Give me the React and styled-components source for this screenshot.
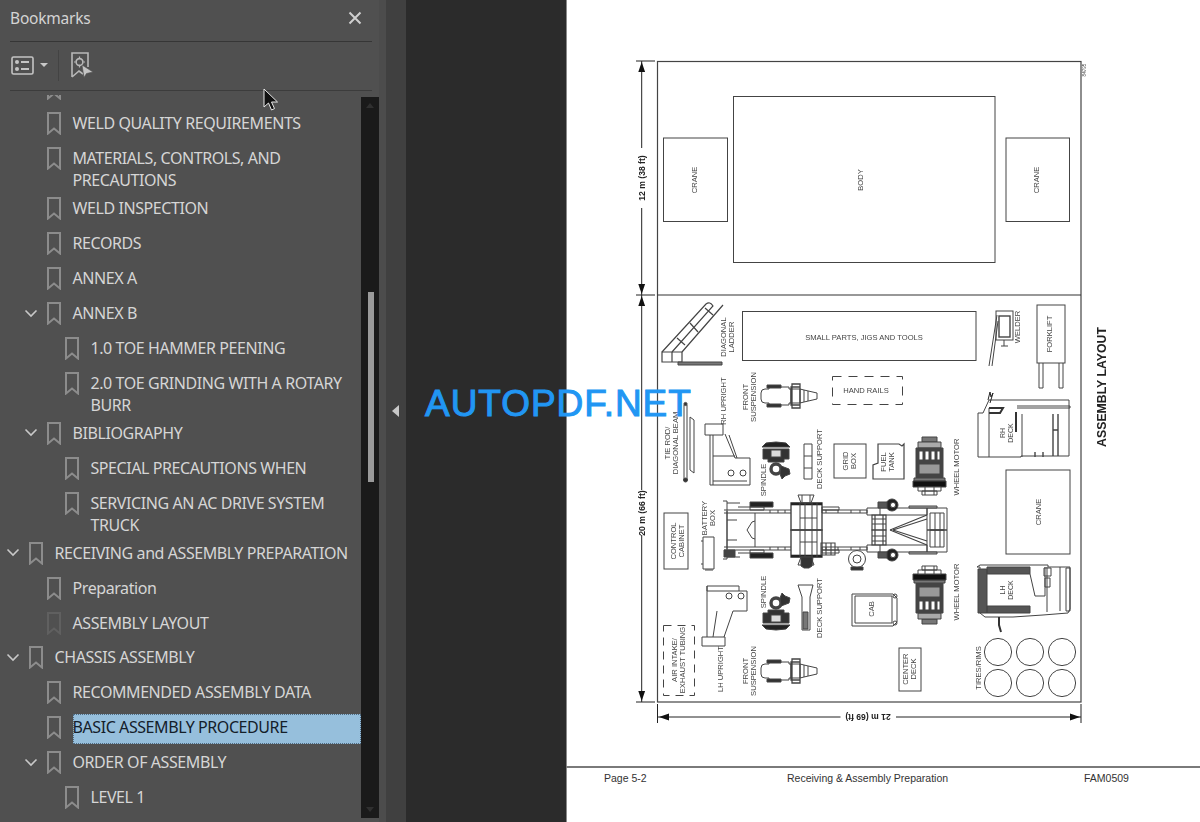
import React from 'react'
import styled, { createGlobalStyle } from 'styled-components'

const Global = createGlobalStyle`
  html, body {
    margin: 0;
    padding: 0;
    height: 100%;
    overflow: hidden;
    background: #2b2b2b;
  }
  #root {
    height: 100%;
  }
`

const Shell = styled.div`
  position: relative;
  display: flex;
  width: 1200px;
  height: 822px;
  overflow: hidden;
  font-family: 'Noto Sans', 'Open Sans', sans-serif;
`

const Sidebar = styled.aside`
  width: 386px;
  flex: none;
  display: flex;
  flex-direction: column;
  background: #505050;
  box-shadow: inset -7px 0 0 #4c4c4c;
`

const Header = styled.div`
  height: 42px;
  margin: 0 14px 0 10px;
  box-sizing: border-box;
  border-bottom: 1px solid #363636;
  display: flex;
  align-items: flex-start;
  justify-content: space-between;
  padding: 7px 10px 0 0;
  flex: none;
`

const Title = styled.div`
  font-size: 15.5px;
  line-height: 22px;
  letter-spacing: -0.2px;
  color: #d4d4d4;
`

const CloseBtn = styled.svg`
  width: 14px;
  height: 14px;
  margin-top: 4px;
`

const Toolbar = styled.div`
  height: 49px;
  margin: 0 14px 0 10px;
  padding-bottom: 2px;
  box-sizing: border-box;
  border-bottom: 1px solid #3c3c3c;
  display: flex;
  align-items: center;
  flex: none;
`

const CaretDown = styled.span`
  width: 0;
  height: 0;
  margin: 0 10px 0 6px;
  border-left: 4px solid transparent;
  border-right: 4px solid transparent;
  border-top: 4px solid #c8c8c8;
`

const ToolSep = styled.span`
  width: 1px;
  height: 31px;
  background: #434343;
  margin-right: 12px;
`

const Body = styled.div`
  flex: 1;
  min-height: 0;
  display: flex;
  padding-right: 7px;
`

const Tree = styled.div`
  flex: 1;
  min-width: 0;
  margin-top: 4px;
  overflow: hidden;
`

const TreeInner = styled.div`
  margin-top: -23.6px;
`

const Row = styled.div`
  display: flex;
  align-items: flex-start;
  min-height: 34.93px;
  box-sizing: border-box;
  padding-top: 6px;
  margin-left: ${({ $level }) => $level * 18}px;
`

const ChevronSlot = styled.span`
  flex: none;
  width: 29px;
  height: 22px;
  display: flex;
  align-items: center;
  padding-left: 6px;
  box-sizing: border-box;
`

const Mark = styled.svg`
  flex: none;
  width: 14px;
  height: 23px;
  margin-right: 11.5px;
  color: ${({ $dim }) => ($dim ? '#606060' : '#8c8c8c')};
`

const Label = styled.div`
  flex: 1;
  min-width: 0;
  font-size: 16px;
  line-height: 22px;
  letter-spacing: -0.42px;
  padding-right: 10px;
  color: #d6d6d6;
  ${({ $selected }) =>
    $selected &&
    `
    background: #96bfdc;
    color: #14202a;
    outline: 1px dotted #506a80;
    outline-offset: -1px;
    padding-top: 2px;
    padding-bottom: 6px;
    margin-top: -2px;
    margin-bottom: -6px;
  `}
`

const ScrollTrack = styled.div`
  flex: none;
  width: 18px;
  margin: 6px 0 4px;
  background: #1a1a1a;
  position: relative;
  display: flex;
  flex-direction: column;
  align-items: center;
  justify-content: space-between;
  padding: 6px 0;
  box-sizing: border-box;
`

const ScrollArrow = styled.span`
  width: 0;
  height: 0;
  border-left: 4px solid transparent;
  border-right: 4px solid transparent;
  ${({ $up }) =>
    $up ? 'border-bottom: 5px solid #303030;' : 'border-top: 5px solid #303030;'}
`

const ScrollThumb = styled.span`
  position: absolute;
  left: 7px;
  top: 195px;
  width: 6px;
  height: 190px;
  background: #9a9a9a;
`

const Splitter = styled.div`
  width: 20px;
  flex: none;
  background: #404040;
  display: flex;
  align-items: center;
  justify-content: center;
`

const SplitArrow = styled.span`
  width: 0;
  height: 0;
  margin-left: -2px;
  margin-top: -1px;
  border-top: 6px solid transparent;
  border-bottom: 6px solid transparent;
  border-right: 7px solid #c8c8c8;
`

const Gutter = styled.div`
  width: 160px;
  flex: none;
  background: #2b2b2b;
`

const Page = styled.main`
  flex: 1;
  min-width: 0;
  background: #fff;
  display: flex;
  flex-direction: column;
  box-shadow: inset 1px 0 0 #8a8a8a;
`

const Sheet = styled.svg`
  display: block;
  width: 634px;
  height: 766px;
  flex: none;
  filter: blur(0.3px);
`

const Footer = styled.div`
  border-top: 2px solid #7a7a7a;
  display: grid;
  grid-template-columns: 183px 297px auto;
  padding: 4px 0 0 38px;
  font-family: 'Liberation Sans', Arial, sans-serif;
  font-size: 10.5px;
  line-height: 13px;
  color: #333;
`

const Caption = styled.text`
  font-family: 'Liberation Sans', Arial, sans-serif;
  font-size: ${({ $size }) => $size || 7.6}px;
  font-weight: ${({ $bold }) => ($bold ? 700 : 400)};
  fill: ${({ $bold }) => ($bold ? '#222' : '#444')};
  text-anchor: middle;
`

const Watermark = styled.div`
  position: absolute;
  left: 425px;
  top: 383px;
  font-family: 'Liberation Sans', Arial, sans-serif;
  font-size: 37px;
  line-height: 42px;
  letter-spacing: 0.95px;
  color: #2196f3;
  -webkit-text-stroke: 1px #2196f3;
  white-space: nowrap;
`

const Pointer = styled.svg`
  position: absolute;
  left: 262px;
  top: 88px;
  width: 17px;
  height: 24px;
`

const BookmarkIcon = ({ dim }) => (
  <Mark viewBox="0 0 14 23" $dim={dim}>
    <path d="M1 1h12v20.5l-6-5-6 5z" fill="none" stroke="currentColor" strokeWidth="2" />
  </Mark>
)

const rows = [
  { level: 1, text: '' },
  { level: 1, text: 'WELD QUALITY REQUIREMENTS' },
  { level: 1, text: 'MATERIALS, CONTROLS, AND PRECAUTIONS' },
  { level: 1, text: 'WELD INSPECTION' },
  { level: 1, text: 'RECORDS' },
  { level: 1, text: 'ANNEX A' },
  { level: 1, text: 'ANNEX B', open: true },
  { level: 2, text: '1.0 TOE HAMMER PEENING' },
  { level: 2, text: '2.0 TOE GRINDING WITH A ROTARY BURR' },
  { level: 1, text: 'BIBLIOGRAPHY', open: true },
  { level: 2, text: 'SPECIAL PRECAUTIONS WHEN' },
  { level: 2, text: 'SERVICING AN AC DRIVE SYSTEM TRUCK' },
  { level: 0, text: 'RECEIVING and ASSEMBLY PREPARATION', open: true },
  { level: 1, text: 'Preparation' },
  { level: 1, text: 'ASSEMBLY LAYOUT', dim: true },
  { level: 0, text: 'CHASSIS ASSEMBLY', open: true },
  { level: 1, text: 'RECOMMENDED ASSEMBLY DATA' },
  { level: 1, text: 'BASIC ASSEMBLY PROCEDURE', selected: true },
  { level: 1, text: 'ORDER OF ASSEMBLY', open: true },
  { level: 2, text: 'LEVEL 1' },
]

// rotated caption, lines stacked left to right
const Rot = ({ x, y, lines, size, bold }) => (
  <g>
    {lines.map((line, i) => {
      const lx = x + i * 8.4
      return (
        <Caption key={line} x={lx} y={y} $size={size} $bold={bold} transform={`rotate(-90 ${lx} ${y})`}>
          {line}
        </Caption>
      )
    })}
  </g>
)

const Suspension = ({ x, y }) => (
  <g transform={`translate(${x} ${y})`}>
    <path d="M0 9q0-4 4-4h4v-2h20v2h2v14h-2v2h-20v-2h-4q-4 0-4-4z" />
    <path d="M6 1h14v3h-14zM6 20h14v3h-14z" fill="#333" />
    <path d="M30 3h9v18h-9zM31 0h8v24h-8z" fill="#fff" strokeWidth="1.3" />
    <path d="M31 5h8M31 19h8" />
    <path d="M39 5l4 1 13 3v6l-13 3-4 1z" />
    <path d="M43 6v12M47 7v10" />
  </g>
)

const Spindle = ({ x, y, flip }) => (
  <g transform={flip ? `translate(${x} ${y + 37}) scale(1 -1)` : `translate(${x} ${y})`}>
    <path d="M4 0q10-2 20 0l4 4h-28z" fill="#222" />
    <path d="M1 6h26v10h-5v3h-16v-3h-5z" fill="#333" />
    <rect x="9" y="7" width="10" height="7" fill="#ddd" />
    <circle cx="14" cy="26" r="5" fill="#fff" strokeWidth="3.4" />
    <path d="M19 23l8 3 1 5-5 2-3 3-2-5z" fill="#333" />
  </g>
)

const WheelMotor = ({ x, y, flip }) => (
  <g transform={flip ? `translate(${x} ${y + 58}) scale(1 -1)` : `translate(${x} ${y})`}>
    <path d="M9 0h15v5h-15z" fill="#777" />
    <path d="M5 5h23v6h-23z" fill="#aaa" />
    <path d="M3 11h27v30h-27z" fill="#444" />
    <path d="M6 14h4v9h-4zM12 14h4v9h-4zM18 14h4v9h-4zM24 14h3v9h-3z" fill="#fff" />
    <path d="M6 27h21v10h-21z" fill="#999" />
    <path d="M1 41h31v3h-31z" fill="#777" />
    <path d="M0 44h33v6h-33z" fill="#111" />
    <path d="M5 50h23v4h-23zM9 54h15v4h-15z" fill="#fff" />
    <path d="M12 50v8M21 50v8" />
  </g>
)

// upper half of the frame, mirrored about y=530
const ChassisHalf = () => (
  <g>
    <path d="M723 501h4v29M727 503h13M724 510h67M724 513h67" />
    <path d="M727 520h10M727 511v19" />
    <path d="M750 502h23v5h-23z" fill="#222" />
    <path d="M750 507h14v3h-14z" />
    <path d="M755 513v17M747 530l5-8 3-1M738 507h12M770 510v3M778 510v3M785 510v3" />
    <path d="M791 503h31v27h-31z" strokeWidth="1.4" />
    <path d="M791 504h31" strokeWidth="2.6" stroke="#222" />
    <path d="M798 495h16l-3 8h-10z" />
    <path d="M802 495v8M810 495v8" />
    <path d="M800 503v27M805 503v27M812 503v27M817 503v27M800 518h17" />
    <path d="M822 507h17v3h-17zM822 510h45v3h-45z" />
    <path d="M826 510v3M838 510v3M851 510v3M860 510v3" />
    <path d="M867 508h60v7h-60zM880 508v7" />
    <path d="M872 515h14v15h-14zM872 519h14M872 524h14M875 515v15M883 515v15" strokeWidth="1.2" />
    <path d="M890 530l37-15M893 530l34-11" strokeWidth="1.2" />
    <path d="M927 508h20v22h-20zM930 513h14v17h-14zM935 513v17M940 513v17" />
    <circle cx="892" cy="505" r="6" fill="#222" />
    <circle cx="893" cy="505" r="2.6" fill="#fff" />
    <path d="M878 502h9v6h-9z" fill="#555" />
    <path d="M909 506h28v2h-28z" fill="#aaa" />
  </g>
)

const Chassis = () => (
  <g>
    <ChassisHalf />
    <g transform="matrix(1 0 0 -1 0 1060)">
      <ChassisHalf />
    </g>
    <path d="M724 550h11v7h-11z" fill="#444" />
    <path d="M821 543h14v12h-14zM826 543v12M831 543v12" strokeWidth="1.1" />
    <path d="M801 557h12l-1 9-3 2h-5l-3-2z" fill="#333" />
    <circle cx="857" cy="559" r="8.5" fill="#fff" />
    <circle cx="857" cy="559" r="4" />
    <path d="M851 567h12v3h-12z" fill="#333" />
  </g>
)

const Drawing = () => (
  <Sheet viewBox="566 0 634 766">
    <g fill="none" stroke="#444" strokeWidth="1">
      {/* bays */}
      <rect x="657.5" y="61.5" width="423.5" height="640.5" strokeWidth="1.2" />
      <path d="M657.5 295h423.5" strokeWidth="1.2" stroke="#333" />
      <rect x="733.5" y="96.5" width="261.5" height="166" />
      <rect x="663.5" y="138" width="64" height="83.5" />
      <rect x="1006" y="138" width="63.5" height="83.5" />
      <rect x="742.5" y="311.5" width="233.5" height="49" />
      <rect x="1006" y="470" width="64" height="84" />
      <rect x="664" y="513" width="24" height="56" />
      <rect x="834" y="444" width="32" height="34" />
      <rect x="899" y="648" width="22" height="43" />
      <rect x="1037" y="305" width="28" height="58" />
      <path d="M1039 363v25h4v-25M1059 363v25h4v-25" />
      <rect x="832.5" y="376.5" width="70" height="28" strokeDasharray="9 7" />
      <rect x="663.5" y="625.5" width="31" height="70" strokeDasharray="8 6" />
      {[998, 1030, 1062].flatMap(cx =>
        [652, 683].map(cy => <circle key={`${cx}-${cy}`} cx={cx} cy={cy} r="13.6" />)
      )}

      {/* dimensions */}
      <g stroke="#222">
        <path d="M636 61h19M636 295h19M636 702h19" />
        <path d="M641.7 61v87M641.7 208v87M641.7 295v195M641.7 535v167" />
        <path d="M657.5 704v19M1081 704v19" />
        <path d="M657.5 717h183M896 717h185" />
      </g>
      <g fill="#111" stroke="none">
        <path d="M641.7 62l-3.4 10h6.8zM641.7 294l-3.4-10h6.8zM641.7 296l-3.4 10h6.8zM641.7 701l-3.4-10h6.8z" />
        <path d="M659 717l10-3.4v6.8zM1080 717l-10-3.4v6.8z" />
      </g>

      {/* ladder */}
      <path d="M662 352l44-48q4-3 7 2l-41 46M682 352l41-47M677 338l8 7M690 323l8 9M705 308l8 7" strokeWidth="1.2" />
      <path d="M662 352h20v10h-20zM672 352v10" strokeWidth="1.2" />
      <path d="M678 362h44v3h-44z" fill="#777" />

      {/* welder */}
      <rect x="996" y="311" width="17" height="29" />
      <rect x="999" y="316" width="11" height="21" strokeWidth="1.4" />
      <path d="M997 315l-8 51M992 366l6-45M1004 340v6M1001 346h7" />

      {/* RH deck */}
      <path d="M978 413h5l6-13h80v56h-48v1h-43z" />
      <path d="M989 408v49M1017 408h53v-2h-53M1022 414v43" />
      <path d="M989 408h14l-3 5h-11M1016 412v20" strokeWidth="2" stroke="#333" />
      <path d="M988 400l2-8 1 5 2-4-3 10" stroke="#222" />
      <path d="M1053 414v42M1058 414v42M1053 430h5M1035 452v5M1043 452v5" strokeWidth="1.4" />

      {/* LH deck */}
      <path d="M977 567h3v46l5 4h28l30-2 25-2 2-4v-42h-22v-2h-68z" fill="#fff" />
      <path d="M978 569h9v44h-9zM987 567h43v7h-43zM987 606h43v7h-43z" fill="#555" />
      <path d="M1047 567v45M1060 567v44M1066 568h4v43h-4z" />
      <path d="M1030 574l5 22h10v-29" />
      <path d="M1044 568h7v8h-7zM1045 578h5v9h-5z" />
      <path d="M999 617v8l2 7" strokeWidth="2" stroke="#333" />

      {/* parts */}
      <Suspension x={761} y={384} />
      <Suspension x={761} y={659} />
      <Spindle x={762} y={443} />
      <Spindle x={762} y={592} flip />
      <WheelMotor x={913} y={437} />
      <WheelMotor x={913} y={566} flip />
      <Chassis />

      {/* tie rod */}
      <path d="M684 405v75M687 405v75" />
      <path d="M690 417l4 3v53l-4-3z" />
      <circle cx="685.5" cy="404" r="1.6" fill="#333" />
      <circle cx="685.5" cy="480" r="2" fill="#333" />

      {/* RH upright */}
      <path d="M705 424h18v11h-18zM710 435v50h40v-27h-15l-10-24" />
      <path d="M713 435v50M713 456h22M729 435l8 23M713 481h34" />
      <circle cx="731" cy="473" r="3" />
      <circle cx="743" cy="473" r="3" />

      {/* LH upright */}
      <path d="M707 586h32v5h-32zM707 586v51M739 591h8v20h-14l-9 26" />
      <path d="M702 637h23v9h-23zM717 611l-4 26" />
      <circle cx="729" cy="596" r="3" />
      <circle cx="741" cy="596" r="3" />

      {/* deck supports */}
      <path d="M804 444h8v35h-8zM804 456h8M804 468h8" />
      <path d="M798 585h15l-3 12v33h-8v-33z" />
      <path d="M803 612h5v17h-5z" fill="#777" />

      {/* fuel tank */}
      <path d="M878 444h21l3 2 2-2v35h-31v-14l5-2z" strokeWidth="1.2" />

      {/* cab */}
      <path d="M852 594h41l4 4v24l-4 4h-41z" />
      <path d="M855 596h37v27h-37z" />
      <circle cx="895" cy="596" r="2" />
      <circle cx="895" cy="623" r="2" />

      {/* battery box */}
      <path d="M703 537h11v32h-11zM701 541h2M701 564h2M705 570h8" />
    </g>

    <Caption x="864" y="340" $size={7.6}>SMALL PARTS, JIGS AND TOOLS</Caption>
    <Caption x="866" y="393" $size={7.6}>HAND RAILS</Caption>
    <Rot x={697} y={180} lines={['CRANE']} />
    <Rot x={863} y={180} lines={['BODY']} />
    <Rot x={1039} y={180} lines={['CRANE']} />
    <Rot x={645} y={178} lines={['12 m (38 ft)']} size={8.6} bold />
    <Rot x={645} y={513} lines={['20 m (66 ft)']} size={8.6} bold />
    <Caption x="868" y="720" $size={8.6} $bold transform="rotate(180 868 717)">21 m (69 ft)</Caption>
    <Rot x={1086} y={70} lines={['84795']} size={4.6} />
    <Rot x={726} y={337} lines={['DIAGONAL', 'LADDER']} />
    <Rot x={748} y={397} lines={['FRONT', 'SUSPENSION']} />
    <Rot x={726} y={401} lines={['RH UPRIGHT']} />
    <Rot x={670} y={443} lines={['TIE ROD/', 'DIAGONAL BEAM']} />
    <Rot x={766} y={480} lines={['SPINDLE']} />
    <Rot x={822} y={459} lines={['DECK SUPPORT']} />
    <Rot x={848} y={461} lines={['GRID', 'BOX']} />
    <Rot x={886} y={462} lines={['FUEL', 'TANK']} />
    <Rot x={959} y={467} lines={['WHEEL MOTOR']} />
    <Rot x={676} y={541} lines={['CONTROL', 'CABINET']} />
    <Rot x={707} y={518} lines={['BATTERY', 'BOX']} />
    <Rot x={723} y={669} lines={['LH UPRIGHT']} />
    <Rot x={677} y={660} lines={['AIR INTAKE/', 'EXHAUST TUBING']} />
    <Rot x={748} y={671} lines={['FRONT', 'SUSPENSION']} />
    <Rot x={766} y={592} lines={['SPINDLE']} />
    <Rot x={822} y={608} lines={['DECK SUPPORT']} />
    <Rot x={874} y={609} lines={['CAB']} />
    <Rot x={908} y={669} lines={['CENTER', 'DECK']} />
    <Rot x={959} y={592} lines={['WHEEL MOTOR']} />
    <Rot x={1005} y={433} lines={['RH', 'DECK']} size={7} />
    <Rot x={1041} y={512} lines={['CRANE']} />
    <Rot x={1005} y={590} lines={['LH', 'DECK']} size={7} />
    <Rot x={981} y={668} lines={['TIRES/RIMS']} />
    <Rot x={1020} y={327} lines={['WELDER']} />
    <Rot x={1052} y={334} lines={['FORKLIFT']} />
    <Rot x={1106} y={387} lines={['ASSEMBLY LAYOUT']} size={12.3} bold />
  </Sheet>
)

export default function App() {
  return (
    <Shell>
      <Global />
      <Sidebar>
        <Header>
          <Title>Bookmarks</Title>
          <CloseBtn viewBox="0 0 14 14">
            <path d="M1.5 1.5l11 11M12.5 1.5l-11 11" stroke="#cfcfcf" strokeWidth="2" fill="none" />
          </CloseBtn>
        </Header>
        <Toolbar>
          <svg width="23" height="19" viewBox="0 0 23 19" style={{ marginLeft: 1 }}>
            <rect x="1" y="1" width="21" height="17" rx="1.5" fill="none" stroke="#c4c4c4" strokeWidth="1.6" />
            <circle cx="6" cy="6" r="2" fill="#c4c4c4" />
            <circle cx="6" cy="13" r="2" fill="#c4c4c4" />
            <path d="M10 6h8M10 13h8" stroke="#c4c4c4" strokeWidth="2" />
          </svg>
          <CaretDown />
          <ToolSep />
          <svg width="23" height="26" viewBox="0 0 23 26">
            <path d="M1 25V1h16v14M1 25l7-6 4 3" fill="none" stroke="#b8b8b8" strokeWidth="1.6" />
            <circle cx="8.5" cy="10" r="3.4" fill="none" stroke="#b8b8b8" strokeWidth="1.6" />
            <path d="M8.5 4.5v1.5M8.5 14v1.5M3 10h1.5M12.5 10h1.5" stroke="#b8b8b8" strokeWidth="1.2" />
            <path d="M11 13l11 7-6.5 1.5-2.5 4z" fill="#c4c4c4" stroke="#505050" strokeWidth="0.6" />
          </svg>
        </Toolbar>
        <Body>
          <Tree>
            <TreeInner>
              {rows.map((row, i) => (
                <Row key={i} $level={row.level}>
                  <ChevronSlot>
                    {row.open && (
                      <svg width="14" height="9" viewBox="0 0 14 9">
                        <path d="M1.5 1.5l5.5 5.5 5.5-5.5" fill="none" stroke="#c8c8c8" strokeWidth="1.6" />
                      </svg>
                    )}
                  </ChevronSlot>
                  <BookmarkIcon dim={row.dim} />
                  <Label $selected={row.selected}>{row.text}</Label>
                </Row>
              ))}
            </TreeInner>
          </Tree>
          <ScrollTrack>
            <ScrollArrow $up />
            <ScrollThumb />
            <ScrollArrow />
          </ScrollTrack>
        </Body>
      </Sidebar>
      <Splitter>
        <SplitArrow />
      </Splitter>
      <Gutter />
      <Page>
        <Drawing />
        <Footer>
          <span>Page 5-2</span>
          <span>Receiving &amp; Assembly Preparation</span>
          <span>FAM0509</span>
        </Footer>
      </Page>
      <Watermark>AUTOPDF.NET</Watermark>
      <Pointer viewBox="0 0 17 24">
        <path d="M2 1v18l4.5-4 3 7 3-1.4-3-6.6h6z" fill="#111" stroke="#e8e8e8" strokeWidth="1" />
      </Pointer>
    </Shell>
  )
}
